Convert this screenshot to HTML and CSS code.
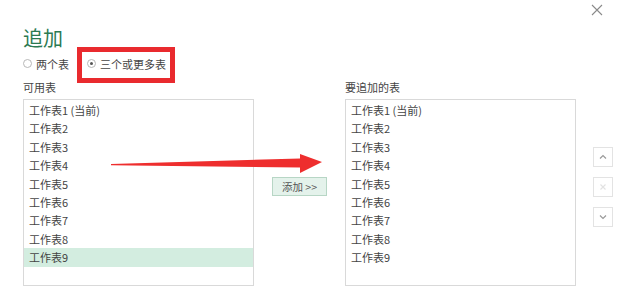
FILE: index.html
```html
<!DOCTYPE html>
<html lang="zh-CN">
<head>
  <meta charset="UTF-8" />
  <title>追加</title>
  <link rel="stylesheet" href="styles.css">
</head>
<body>

  <div class="dialog">
    <!-- close button -->
    <svg class="close" width="12" height="12" viewBox="0 0 12 12">
      <path d="M1 1 L11 11 M11 1 L1 11" stroke="#8a8a8a" stroke-width="1.1" fill="none"/>
    </svg>

    <h1 class="title">追加</h1>

    <div class="modes">
      <label class="mode"><span class="radio"></span>两个表</label>
      <label class="mode mode-marked"><span class="radio checked"></span>三个或更多表</label>
    </div>

    <div class="panes">
      <div class="pane">
        <div class="pane-label">可用表</div>
        <ul class="list">
          <li>工作表1 (当前)</li>
          <li>工作表2</li>
          <li>工作表3</li>
          <li>工作表4</li>
          <li>工作表5</li>
          <li>工作表6</li>
          <li>工作表7</li>
          <li>工作表8</li>
          <li class="selected">工作表9</li>
        </ul>
      </div>

      <div class="middle">
        <button class="add-btn">添加 &gt;&gt;</button>
      </div>

      <div class="pane">
        <div class="pane-label">要追加的表</div>
        <ul class="list">
          <li>工作表1 (当前)</li>
          <li>工作表2</li>
          <li>工作表3</li>
          <li>工作表4</li>
          <li>工作表5</li>
          <li>工作表6</li>
          <li>工作表7</li>
          <li>工作表8</li>
          <li>工作表9</li>
        </ul>
      </div>

      <div class="side">
        <button class="side-btn">
          <svg width="10" height="10" viewBox="0 0 10 10"><path d="M2 6.5 L5 3.5 L8 6.5" stroke="#9a9a9a" stroke-width="1.2" fill="none"/></svg>
        </button>
        <button class="side-btn">
          <svg width="10" height="10" viewBox="0 0 10 10"><path d="M2.5 2.5 L7.5 7.5 M7.5 2.5 L2.5 7.5" stroke="#e2e2e2" stroke-width="1.1" fill="none"/></svg>
        </button>
        <button class="side-btn">
          <svg width="10" height="10" viewBox="0 0 10 10"><path d="M2 3.5 L5 6.5 L8 3.5" stroke="#9a9a9a" stroke-width="1.2" fill="none"/></svg>
        </button>
      </div>
    </div>

    <!-- annotation arrow drawn over the dialog -->
    <svg class="arrow" width="640" height="295" viewBox="0 0 640 295">
      <polygon points="111,164 300,158.5 300,154 322,162 300,173 300,167.5 111,165.2" fill="#ee2e2e"/>
    </svg>
  </div>

</body>
</html>
```

FILE: styles.css
```css
body {
  margin: 0;
  background: #fff;
  font-family: "Noto Sans CJK SC", "Noto Sans", sans-serif;
  color: #444;
}
.dialog {
  position: relative;
  width: 640px;
  height: 295px;
  box-sizing: border-box;
  padding: 28px 0 0 23px;
}
.close {
  position: absolute;
  top: 4px;
  right: 37px;
}
.title {
  margin: 0;
  font-size: 20px;
  font-weight: normal;
  line-height: 19px;
  color: #2b7a52;
}

/* Radio row */
.modes {
  display: flex;
  align-items: center;
  height: 26px;
  margin-top: 5px;
}
.mode {
  display: flex;
  align-items: center;
  height: 26px;
  box-sizing: border-box;
  padding-bottom: 3px;
  font-size: 11px;
  color: #444;
}
.mode-marked {
  margin-left: 13px;
  padding-left: 5px;
  padding-right: 4px;
  outline: 5px solid #e92a2e;
}
.radio {
  width: 7px;
  height: 7px;
  border: 1px solid #b8b8b8;
  border-radius: 50%;
  margin-right: 4px;
  position: relative;
  box-sizing: content-box;
}
.radio.checked::after {
  content: "";
  position: absolute;
  left: 2px;
  top: 2px;
  width: 3px;
  height: 3px;
  border-radius: 50%;
  background: #555;
}

/* Panes */
.panes {
  display: grid;
  grid-template-columns: 231px 91px 231px 20px;
  margin-top: 2px;
}
.panes .side {
  margin-left: 17px;
}
.pane-label {
  font-size: 11px;
  line-height: 14px;
  color: #444;
  margin-bottom: 5px;
}
.list {
  list-style: none;
  margin: 0;
  padding: 1px 0 0;
  height: 187px;
  box-sizing: border-box;
  border: 1px solid #d9d9d9;
}
.list li {
  height: 18.4px;
  line-height: 18.4px;
  padding-left: 5px;
  font-size: 11px;
  color: #444;
}
.list li.selected {
  background: #d3ede0;
}
.middle {
  display: flex;
  justify-content: center;
  padding-top: 97px;
}
.add-btn {
  width: 55px;
  height: 19px;
  padding: 0;
  border: 1px solid #b7d6c5;
  background: #e4f2eb;
  color: #555;
  font-family: inherit;
  font-size: 10.5px;
  align-self: flex-start;
}
.side {
  display: flex;
  flex-direction: column;
  gap: 10px;
  padding-top: 67px;
}
.side-btn {
  width: 20px;
  height: 20px;
  padding: 0;
  border: 1px solid #e3e3e3;
  background: #fff;
  display: flex;
  align-items: center;
  justify-content: center;
}
.arrow {
  position: absolute;
  top: 0;
  left: 0;
  pointer-events: none;
}
```
